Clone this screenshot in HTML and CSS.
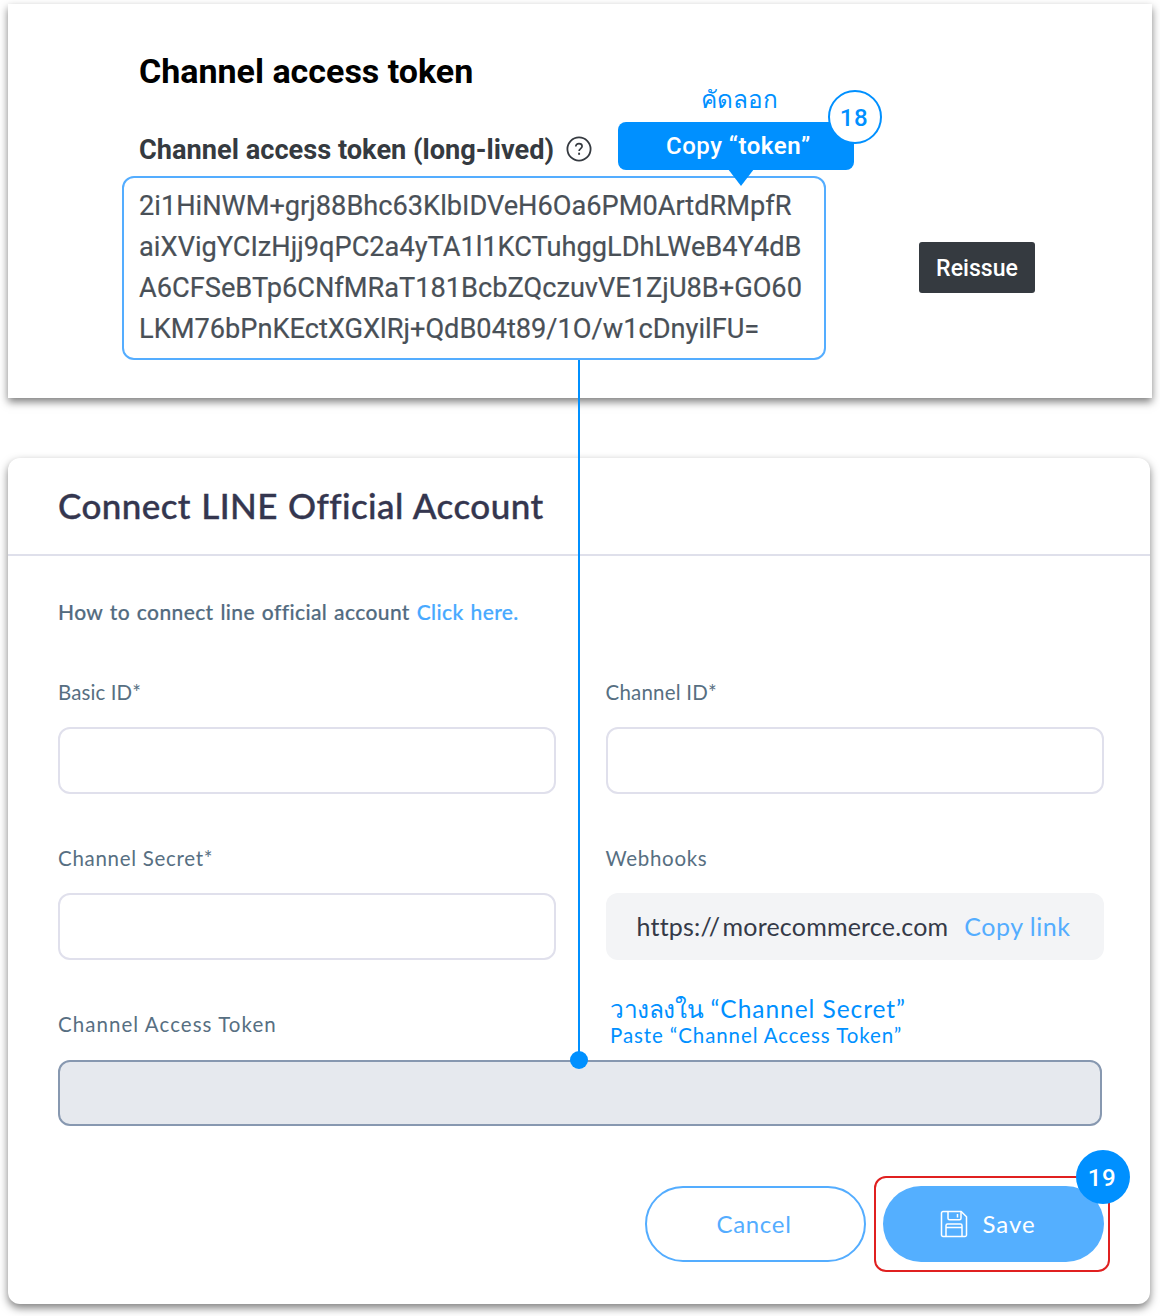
FILE: index.html
```html
<!DOCTYPE html>
<html lang="en">
<head>
<meta charset="utf-8">
<title>Connect LINE Official Account</title>
<link rel="stylesheet" href="styles.css">
</head>
<body>
<main class="page">
  <section class="card token-card">
    <h2 class="token-heading">Channel access token</h2>
    <div class="token-sub">
      <span>Channel access token (long-lived)</span>
      <svg class="help" viewBox="0 0 26 26" width="26" height="26" fill="none" stroke="#353a40">
        <circle cx="13" cy="13" r="11.6" stroke-width="1.8"/>
        <path d="M9.800 10.600c0-1.800 1.300-2.900 3.200-2.900s3.100 1 3.100 2.600c0 2.300-3 2.300-3 4.700" stroke-width="1.7"/>
        <path d="M13.100 16.700v2.100" stroke-width="1.900"/>
      </svg>
    </div>
    <div class="token-row">
      <div class="token-box">2i1HiNWM+grj88Bhc63KlbIDVeH6Oa6PM0ArtdRMpfR<br>aiXVigYCIzHjj9qPC2a4yTA1l1KCTuhggLDhLWeB4Y4dB<br>A6CFSeBTp6CNfMRaT181BcbZQczuvVE1ZjU8B+GO60<br>LKM76bPnKEctXGXlRj+QdB04t89/1O/w1cDnyilFU=</div>
      <button class="reissue">Reissue</button>
    </div>
  </section>

  <section class="card form-card">
    <header class="form-header"><h1 class="form-title">Connect LINE Official Account</h1></header>
    <div class="form-body">
      <p class="howto">How to connect line official account <a class="howto-link">Click here.</a></p>
      <div class="fields">
        <div class="field"><label class="label label-basic">Basic ID*</label><div class="input"></div></div>
        <div class="field"><label class="label label-id">Channel ID*</label><div class="input"></div></div>
        <div class="field"><label class="label">Channel Secret*</label><div class="input"></div></div>
        <div class="field"><label class="label">Webhooks</label>
          <div class="webhook"><span>https:<span class="slashes">//</span>morecommerce.com</span><a class="copy-link">Copy link</a></div>
        </div>
        <div class="field field-wide"><label class="label label-access">Channel Access Token</label><div class="input input-active"></div></div>
      </div>
      <div class="actions">
        <button class="btn btn-cancel">Cancel</button>
        <button class="btn btn-save">
          <svg viewBox="0 0 28 28" width="28" height="28" fill="none" stroke="#fff" stroke-width="1.5" stroke-linejoin="round">
            <path d="M3 1.500h18.200l5.300 5.300V25a1.500 1.500 0 0 1-1.500 1.500H3A1.500 1.500 0 0 1 1.500 25V3A1.500 1.500 0 0 1 3 1.500z"/>
            <path d="M8 1.500v6.700a1.500 1.500 0 0 0 1.500 1.500h10a1.500 1.500 0 0 0 1.500-1.500V1.500M17.500 4v3.500"/>
            <path d="M6 26.500V15.600a1.500 1.500 0 0 1 1.500-1.500h13a1.500 1.500 0 0 1 1.500 1.500v10.900M6 17.500h16"/>
          </svg>
          <span>Save</span>
        </button>
      </div>
    </div>
  </section>

  <div class="connector"></div>
  <div class="connector-dot"></div>
  <div class="copy-thai" lang="th">คัดลอก</div>
  <div class="tooltip">Copy “<b>token</b>”</div>
  <div class="badge badge-18">18</div>
  <div class="paste-note">
    <div class="paste-thai"><span class="thai" lang="th">วางลงใน</span> “Channel Secret”</div>
    <div class="paste-en">Paste “Channel Access Token”</div>
  </div>
  <div class="save-frame"></div>
  <div class="badge badge-19">19</div>
</main>
</body>
</html>
```
FILE: styles.css
```css
* { box-sizing: border-box; }
body { margin: 0; background: #fff; font-family: Lato, "Noto Sans", sans-serif; }
h1, h2, p { margin: 0; }
button { font: inherit; border: 0; padding: 0; }

.page { position: relative; width: 1160px; height: 1316px; padding: 4px 8px 0; overflow: hidden; }
.card { background: #fff; box-shadow: 0 4px 8px rgba(0, 0, 0, .5); }

.token-card { height: 394px; padding: 47px 0 0 114px; font-family: Roboto, sans-serif; }
.token-heading { margin-left: 17px; font-size: 34px; line-height: 40px; font-weight: 700; color: #000; }
.token-sub { display: flex; align-items: center; gap: 12px; height: 40px; margin: 38px 0 7px 17px; font-size: 27.200px; font-weight: 700; color: #353a40; }
.token-sub span { padding-top: 2px; }
.token-row { display: flex; align-items: center; gap: 93px; }
.token-box { width: 704px; height: 184px; padding: 8px 15px; border: 2px solid #54adff; border-radius: 12px; font-size: 27.190px; line-height: 41px; color: #495057; white-space: nowrap; -webkit-text-stroke: .2px; }
.reissue { width: 116px; height: 51px; margin-bottom: 1px; padding-top: 2px; border-radius: 3px; background: #353a40; color: #fff; font-size: 23.100px; font-weight: 500; }

.form-card { width: 1142px; height: 846px; margin-top: 60px; border-radius: 12px; }
.form-header { display: flex; align-items: center; height: 98px; padding: 0 0 2px 50px; border-bottom: 2px solid #dfe0eb; }
.form-title { font-size: 35px; font-weight: 500; letter-spacing: .420px; word-spacing: 1px; color: #34364f; -webkit-text-stroke: .4px; }
.form-body { padding: 44px 46px 0 50px; }
.howto { font-size: 21px; line-height: 24px; font-weight: 500; letter-spacing: .380px; word-spacing: 1.200px; color: #526b80; -webkit-text-stroke: .2px; }
.howto-link { color: #47a9ff; }
.fields { display: grid; grid-template-columns: 498px 498px; column-gap: 49.500px; row-gap: 52px; margin-top: 56px; }
.field-wide { grid-column: span 2; width: 1044px; }
.label { display: block; height: 24px; margin-bottom: 23px; font-size: 20.500px; line-height: 24px; letter-spacing: .700px; color: #576f82; }
.label-basic { letter-spacing: .1px; }
.label-id { letter-spacing: .2px; }
.label-access { letter-spacing: 1.050px; margin-bottom: 24px; }
.input { height: 67px; border: 2px solid #e0e0ec; border-radius: 12px; }
.input-active { height: 66px; border-color: #8798b0; background: #e6e9ee; }
.webhook { display: flex; align-items: center; gap: 16px; height: 67px; padding: 0 0 2px 31px; border-radius: 12px; background: #f3f4f6; font-size: 25px; letter-spacing: .200px; color: #353a48; }
.slashes { letter-spacing: 2.500px; }
.copy-link { color: #54adff; letter-spacing: .500px; }

.actions { display: flex; justify-content: flex-end; gap: 17px; margin-top: 60px; }
.btn { display: flex; align-items: center; justify-content: center; width: 221px; height: 76px; border-radius: 38px; font-size: 24px; }
.btn-cancel { border: 2px solid #54adff; background: #fff; color: #54adff; letter-spacing: .7px; padding: 0 3px 2px 0; }
.btn-save { gap: 14px; background: #54afff; color: #fff; letter-spacing: 1px; padding-right: 11px; }
.btn-save span { padding-bottom: 2px; }

.connector { position: absolute; left: 578px; top: 360px; width: 2px; height: 692px; background: #0090ff; }
.connector-dot { position: absolute; left: 570px; top: 1051px; width: 18px; height: 18px; border-radius: 50%; background: #0090ff; }
.copy-thai { position: absolute; left: 701px; top: 83px; font-size: 24.300px; line-height: 32px; color: #0090ff; }
.tooltip { position: absolute; left: 618px; top: 122px; width: 236px; height: 48px; padding-left: 48px; border-radius: 8px; background: #0090ff; color: #fff; font: 500 24px/48px Roboto, sans-serif; letter-spacing: .5px; }
.tooltip::after { content: ""; position: absolute; left: 110px; top: 47px; border: solid transparent; border-width: 17px 13px 0; border-top-color: #0090ff; }
.tooltip b { font-weight: 600; }
.badge { position: absolute; display: flex; align-items: center; justify-content: center; width: 54px; height: 54px; border-radius: 50%; font: 500 24px Roboto, sans-serif; letter-spacing: .5px; }
.badge-18 { left: 828px; top: 90px; border: 2px solid #0090ff; background: #fff; color: #0090ff; padding: 1px 2px 0 0; }
.badge-19 { left: 1076px; top: 1150px; background: #0090ff; color: #fff; padding: 1px 2px 0 0; }
.paste-note { position: absolute; left: 610px; top: 994px; color: #0090ff; white-space: nowrap; }
.paste-thai { font-size: 24.500px; line-height: 30px; letter-spacing: .950px; }
.thai { letter-spacing: -.4px; }
.paste-en { font-size: 20.500px; line-height: 22px; letter-spacing: .900px; }
.save-frame { position: absolute; left: 874px; top: 1176px; width: 236px; height: 96px; border: 2px solid #e02020; border-radius: 12px; }
```
